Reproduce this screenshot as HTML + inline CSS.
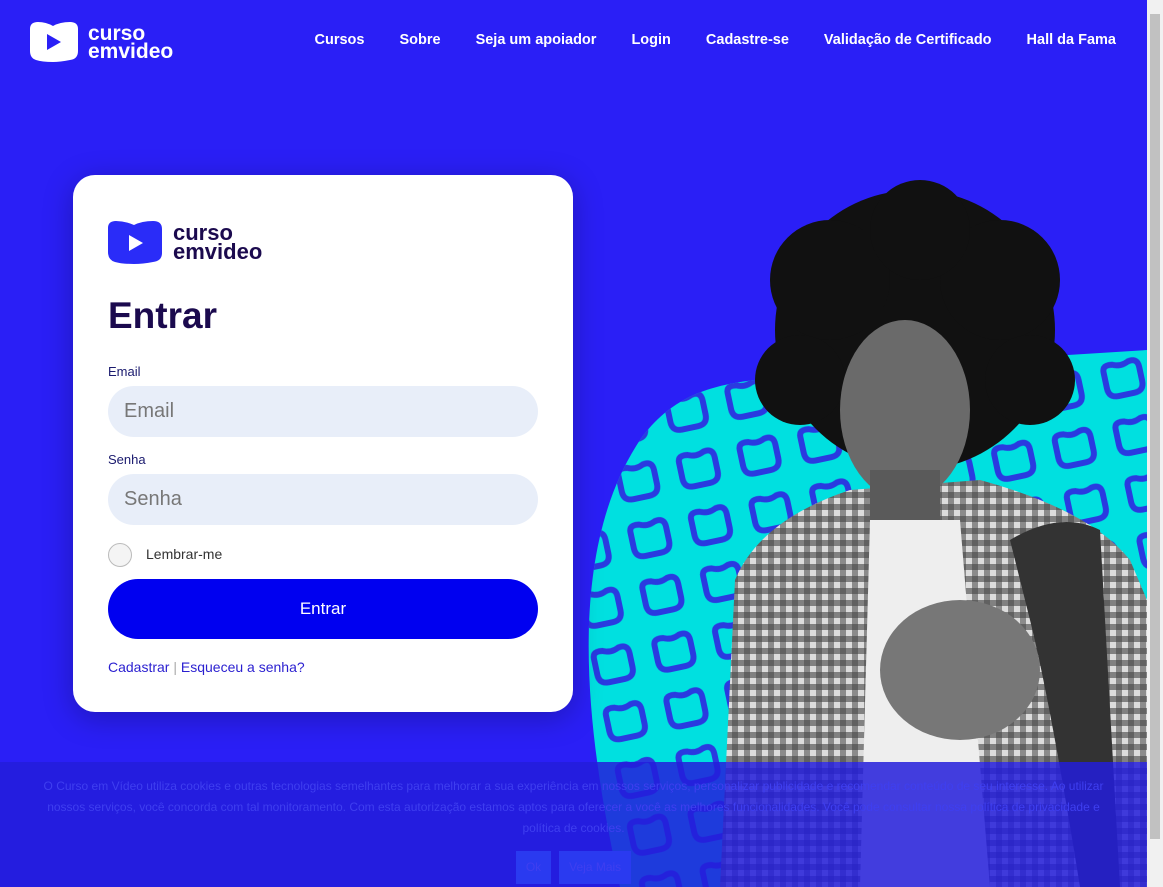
<!DOCTYPE html>
<html><head><meta charset="utf-8"><style>
*{margin:0;padding:0;box-sizing:border-box}
body{width:1163px;height:887px;overflow:hidden;background:#2a1ff6;font-family:"Liberation Sans",sans-serif;position:relative}
.nav{position:absolute;top:32px;right:47px;display:flex;gap:35px;color:#fff;font-weight:bold;font-size:14.5px}
.card{position:absolute;left:73px;top:175px;width:500px;height:537px;background:#fff;border-radius:22px;box-shadow:0 6px 30px rgba(0,0,0,.25)}
label{position:absolute;left:35px;font-size:13px;color:#1a1a6e}
.inp{position:absolute;left:35px;width:430px;height:51px;border-radius:26px;background:#e8eef9;color:#777;font-size:20px;padding:14px 16px}
.btn{position:absolute;left:35px;top:404px;width:430px;height:60px;border-radius:30px;background:#0000f0;color:#fff;font-size:17px;text-align:center;line-height:60px}
.cookie{position:absolute;left:0;top:762px;width:1147px;height:125px;background:rgba(35,29,219,.85);color:#3f3ff0;font-size:12px;text-align:center;padding:14px 40px;line-height:21px;font-family:"Liberation Sans Narrow","Liberation Sans",sans-serif}
.sb{position:absolute;right:0;top:0;width:16px;height:887px;background:#f1f1f1}
.sb div{position:absolute;left:3px;top:14px;width:10px;height:825px;background:#c1c1c1}
</style></head><body>
<svg style="position:absolute;left:28px;top:21px" width="170" height="42" viewBox="0 0 170 42">
<path d="M2,8 Q2,1 10,1 Q18,1 25,5 Q32,1 42,1 Q50,1 50,8 V30 Q50,38 42,39 Q32,41 25,41 Q14,41 8,39 Q2,37 2,30Z" fill="#fff"/>
<path d="M19,13 L33,21 L19,29Z" fill="#2a1ff6"/>
<text x="60" y="19" font-family="Liberation Sans" font-weight="bold" font-size="21" fill="#fff">curso</text>
<text x="60" y="37" font-family="Liberation Sans" font-weight="bold" font-size="21" fill="#fff">emvideo</text>
</svg>
<div class="nav"><span>Cursos</span><span>Sobre</span><span>Seja um apoiador</span><span>Login</span><span>Cadastre-se</span><span>Validação de Certificado</span><span>Hall da Fama</span></div>
<svg style="position:absolute;left:0;top:0" width="1147" height="887">
<defs><pattern id="ck" width="12" height="12" patternUnits="userSpaceOnUse"><rect width="12" height="12" fill="#ddd"/><rect width="6" height="12" fill="#555" opacity=".6"/><rect width="12" height="6" fill="#444" opacity=".6"/></pattern>
<pattern id="bl" width="62" height="58" patternUnits="userSpaceOnUse" patternTransform="rotate(-12)"><path d="M10,14 Q10,6 20,8 Q28,12 36,8 Q46,6 46,16 V30 Q46,40 36,40 H20 Q10,40 10,30Z" fill="none" stroke="#2a3ae0" stroke-width="6"/></pattern></defs>
<path d="M620,887 C590,750 560,560 640,440 C690,370 760,385 830,370 L1147,350 L1147,887 Z" fill="#00e0e0"/>
<path d="M620,887 C590,750 560,560 640,440 C690,370 760,385 830,370 L1147,350 L1147,887 Z" fill="url(#bl)"/>
<path d="M720,887 L735,580 Q760,520 850,490 L980,480 Q1090,510 1130,560 L1147,600 L1147,887Z" fill="url(#ck)"/>
<path d="M870,520 L960,520 L990,887 L860,887Z" fill="#eee"/>
<circle cx="915" cy="330" r="140" fill="#111"/>
<circle cx="830" cy="280" r="60" fill="#111"/><circle cx="1000" cy="280" r="60" fill="#111"/><circle cx="920" cy="230" r="50" fill="#111"/><circle cx="1030" cy="380" r="45" fill="#111"/><circle cx="800" cy="380" r="45" fill="#111"/>
<ellipse cx="905" cy="410" rx="65" ry="90" fill="#6a6a6a"/>
<rect x="870" y="470" width="70" height="50" fill="#5a5a5a"/>
<path d="M1010,540 Q1060,510 1100,530 L1120,887 L1080,887 Q1050,700 1030,620Z" fill="#333"/>
<ellipse cx="960" cy="670" rx="80" ry="70" fill="#777"/>
</svg>
<div class="card">
<svg style="position:absolute;left:34px;top:45px" width="190" height="46" viewBox="0 0 190 46">
<path d="M1,8 Q1,1 9,1 Q18,1 27,5 Q35,1 46,1 Q55,1 55,9 V33 Q55,41 46,42 Q36,44 27,44 Q15,44 8,42 Q1,40 1,32Z" fill="#2a2cf8"/>
<path d="M22,15 L36,23 L22,31Z" fill="#fff"/>
<text x="66" y="20" font-family="Liberation Sans" font-weight="bold" font-size="22" fill="#1b0a4e">curso</text>
<text x="66" y="39" font-family="Liberation Sans" font-weight="bold" font-size="22" fill="#1b0a4e">emvideo</text>
</svg>
<div style="position:absolute;left:35px;top:120px;font-size:37px;font-weight:bold;color:#1b0a4e">Entrar</div>
<label style="top:189px">Email</label>
<div class="inp" style="top:211px">Email</div>
<label style="top:277px">Senha</label>
<div class="inp" style="top:299px">Senha</div>
<div style="position:absolute;left:35px;top:368px;width:24px;height:24px;border-radius:50%;border:1px solid #bbb;background:#f4f4f4"></div>
<div style="position:absolute;left:73px;top:371px;font-size:14px;color:#333">Lembrar-me</div>
<div class="btn">Entrar</div>
<div style="position:absolute;left:35px;top:484px;font-size:14px;color:#2a1fd0">Cadastrar <span style="color:#aaa">|</span> Esqueceu a senha?</div>
</div>
<div class="cookie">O Curso em Vídeo utiliza cookies e outras tecnologias semelhantes para melhorar a sua experiência em nossos serviços, personalizar publicidade e recomendar conteúdo de seu interesse. Ao utilizar nossos serviços, você concorda com tal monitoramento. Com esta autorização estamos aptos para oferecer a você as melhores funcionalidades. Você pode consultar nossa política de privacidade e política de cookies.
<div style="margin-top:12px"><span style="display:inline-block;background:#2a3af0;padding:6px 10px;margin-right:8px">Ok</span><span style="display:inline-block;background:#2a3af0;padding:6px 10px">Veja Mais</span></div></div>
<div class="sb"><div></div></div>
</body></html>
